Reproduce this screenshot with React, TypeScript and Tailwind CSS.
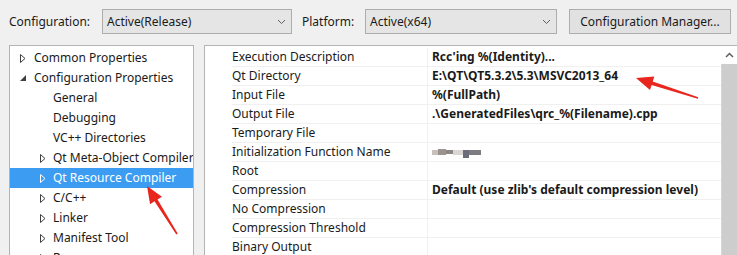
import React from "react";

const font = { fontFamily: '"Noto Sans", "Open Sans", sans-serif' };

const Chevron = () => (
  <svg width="9" height="6" viewBox="0 0 9 6" className="shrink-0">
    <polyline points="1,1 4.5,4.5 8,1" fill="none" stroke="#606060" strokeWidth="1" />
  </svg>
);

const Collapsed = ({ white }: { white?: boolean }) => (
  <svg width="6" height="9" viewBox="0 0 6 9">
    <polygon points="0.5,0.5 5,4.5 0.5,8.5" fill="none" stroke={white ? "#ffffff" : "#404040"} strokeWidth="1" />
  </svg>
);

const Expanded = () => (
  <svg width="6" height="6" viewBox="0 0 6 6">
    <polygon points="6,0 6,6 0,6" fill="#404040" />
  </svg>
);

type Item = { label: string; level: 0 | 1; kind: "open" | "closed" | "leaf"; selected?: boolean };

const tree: Item[] = [
  { label: "Common Properties", level: 0, kind: "closed" },
  { label: "Configuration Properties", level: 0, kind: "open" },
  { label: "General", level: 1, kind: "leaf" },
  { label: "Debugging", level: 1, kind: "leaf" },
  { label: "VC++ Directories", level: 1, kind: "leaf" },
  { label: "Qt Meta-Object Compiler", level: 1, kind: "closed" },
  { label: "Qt Resource Compiler", level: 1, kind: "closed", selected: true },
  { label: "C/C++", level: 1, kind: "closed" },
  { label: "Linker", level: 1, kind: "closed" },
  { label: "Manifest Tool", level: 1, kind: "closed" },
  { label: "Resources", level: 1, kind: "closed" },
];

const props: [string, string][] = [
  ["Execution Description", "Rcc'ing %(Identity)..."],
  ["Qt Directory", "E:\\QT\\QT5.3.2\\5.3\\MSVC2013_64"],
  ["Input File", "%(FullPath)"],
  ["Output File", ".\\GeneratedFiles\\qrc_%(Filename).cpp"],
  ["Temporary File", ""],
  ["Initialization Function Name", "__blur__"],
  ["Root", ""],
  ["Compression", "Default (use zlib's default compression level)"],
  ["No Compression", ""],
  ["Compression Threshold", ""],
  ["Binary Output", ""],
  ["", ""],
];

const Blur = () => (
  <div className="flex items-center h-[12px]">
    <div className="w-[6px] h-[5px] bg-[#c9bfbb]" />
    <div className="w-[8px] h-[6px] bg-[#9a9390]" />
    <div className="w-[7px] h-[4px] bg-[#8c8785]" />
    <div className="w-[10px] h-[5px] bg-[#d9d6d6]" />
    <div className="w-[6px] h-[8px] bg-[#6b6e78] mt-[4px]" />
    <div className="w-[12px] h-[5px] bg-[#7d7c80]" />
  </div>
);

const Arrow = ({ x1, y1, x2, y2 }: { x1: number; y1: number; x2: number; y2: number }) => {
  const dx = x2 - x1;
  const dy = y2 - y1;
  const len = Math.hypot(dx, dy);
  const ux = dx / len;
  const uy = dy / len;
  const px = -uy;
  const py = ux;
  const head = 17;
  const hw = 7;
  const bx = x2 - ux * head;
  const by = y2 - uy * head;
  const pts = [
    [x1 + px * 0.8, y1 + py * 0.8],
    [bx + px * 1.8, by + py * 1.8],
    [bx + px * hw, by + py * hw],
    [x2, y2],
    [bx - px * hw, by - py * hw],
    [bx - px * 1.8, by - py * 1.8],
    [x1 - px * 0.8, y1 - py * 0.8],
  ]
    .map((p) => p.join(","))
    .join(" ");
  return <polygon points={pts} fill="#e8261e" />;
};

export default function App() {
  return (
    <div className="relative w-[737px] h-[255px] overflow-hidden bg-[#f0f0f0] text-[12px] text-[#1a1a1a]" style={font}>
      {/* top bar */}
      <div className="flex items-center h-[45px] pb-[2px]">
        <span className="ml-[9px] w-[93px]">Configuration:</span>
        <div className="flex items-center justify-between w-[190px] h-[25px] pl-[4px] pr-[5px] border border-[#adadad] bg-[#e5e5e5]">
          <span>Active(Release)</span>
          <Chevron />
        </div>
        <span className="ml-[10px] w-[63px]">Platform:</span>
        <div className="flex items-center justify-between w-[192px] h-[25px] pl-[4px] pr-[5px] border border-[#adadad] bg-[#e5e5e5]">
          <span>Active(x64)</span>
          <Chevron />
        </div>
        <button className="ml-[12px] w-[162px] h-[25px] border border-[#adadad] bg-[#e1e1e1]">
          Configuration Manager...
        </button>
      </div>

      <div className="flex h-[230px]">
        {/* tree */}
        <div className="ml-[9px] w-[185px] h-[240px] border border-[#b4b4b4] bg-white pt-[2px] overflow-hidden">
          {tree.map((it) => (
            <div
              key={it.label}
              className={`flex items-center h-[20px] whitespace-nowrap ${it.selected ? "bg-[#3c9cf2] text-white" : ""}`}
            >
              <div className={`flex items-center justify-center w-[6px] ${it.level === 0 ? "ml-[10px] mr-[8px]" : "ml-[30px] mr-[7px]"}`}>
                {it.kind === "closed" && <Collapsed white={it.selected} />}
                {it.kind === "open" && <Expanded />}
              </div>
              <span>{it.label}</span>
            </div>
          ))}
        </div>

        {/* property grid */}
        <div className="ml-[10px] flex-1 h-[240px] border-l border-t border-[#b4b4b4] bg-white flex overflow-hidden">
          <div className="flex-1 pt-[2px]">
            {props.map(([name, value], i) => (
              <div key={i} className="flex h-[19px]">
                <div className="w-[27px] shrink-0" />
                <div className="w-[195px] shrink-0 flex items-center border-b border-[#f0f0f0] whitespace-nowrap">
                  {name}
                </div>
                <div className="flex-1 flex items-center pl-[4px] border-l border-b border-[#f0f0f0] font-bold whitespace-nowrap">
                  {value === "__blur__" ? <Blur /> : value}
                </div>
              </div>
            ))}
          </div>
          <div className="w-[16px] shrink-0 flex flex-col">
            <div className="h-[18px] flex items-center justify-center">
              <svg width="9" height="6" viewBox="0 0 9 6">
                <polyline points="1,5 4.5,1.5 8,5" fill="none" stroke="#606060" strokeWidth="1.5" />
              </svg>
            </div>
            <div className="flex-1 bg-[#cdcdcd] border-l border-[#d6d6d6]" />
          </div>
        </div>
      </div>

      {/* annotation arrows */}
      <svg className="absolute inset-0 pointer-events-none" width="737" height="255">
        <Arrow x1={177} y1={234} x2={147} y2={186} />
        <Arrow x1={698} y1={98} x2={636} y2={78} />
      </svg>
    </div>
  );
}
